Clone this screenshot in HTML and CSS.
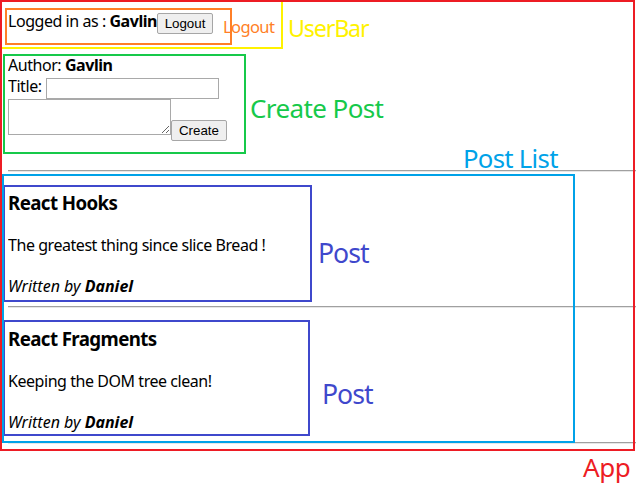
FILE: index.html
```html
<!DOCTYPE html>
<html lang="en">
<head>
<meta charset="utf-8">
<title>Blog App</title>
<link rel="stylesheet" href="styles.css">
</head>
<body>
<div class="app">
  <div class="userbar">
    <span class="line">Logged in as : <b>Gavlin</b></span><button class="btn logout" type="button">Logout</button>
  </div>
  <form class="create">
    <div class="line">Author: <b>Gavlin</b></div>
    <div class="title-row">
      <label class="line title-label" for="title">Title:</label><input id="title" class="title-input" type="text">
    </div>
    <div class="content-row">
      <textarea class="content-input"></textarea><input class="btn create-btn" type="submit" value="Create">
    </div>
  </form>
  <hr class="rule">
  <div class="postlist">
    <div class="post">
      <h3 class="post-title">React Hooks</h3>
      <div class="line">The greatest thing since slice Bread !</div>
      <div class="line written"><i>Written by <b>Daniel</b></i></div>
    </div>
    <hr class="rule">
    <div class="post">
      <h3 class="post-title">React Fragments</h3>
      <div class="line">Keeping the DOM tree clean!</div>
      <div class="line written"><i>Written by <b>Daniel</b></i></div>
    </div>
    <hr class="rule">
  </div>
</div>

<div class="annotations">
  <div class="box box-userbar"></div>
  <div class="box box-logout"></div>
  <div class="box box-create"></div>
  <div class="box box-post1"></div>
  <div class="box box-post2"></div>
  <div class="box box-postlist"></div>
  <div class="box box-app"></div>
  <span class="label label-logout">Logout</span>
  <span class="label label-userbar">UserBar</span>
  <span class="label label-create">Create Post</span>
  <span class="label label-postlist">Post List</span>
  <span class="label label-post1">Post</span>
  <span class="label label-post2">Post</span>
  <span class="label label-app">App</span>
</div>
</body>
</html>
```

FILE: styles.css
```css
* {
  box-sizing: border-box;
}

html,
body {
  background: #ffffff;
}

body {
  margin: 8px 0 0 8px;
  font-family: "Noto Sans", "Open Sans", sans-serif;
  font-size: 16px;
  line-height: 21px;
  letter-spacing: -0.45px;
  color: #000000;
}

.line {
  display: block;
  line-height: 21px;
}

/* ---------- UserBar ---------- */
.userbar {
  display: flex;
  align-items: flex-start;
  padding-top: 3px;
}

.btn {
  width: 56px;
  height: 21px;
  padding: 0;
  margin: 0;
  border: 1px solid #a6a6a6;
  border-radius: 2px;
  background: #efefef;
  color: #000000;
  font-family: "Liberation Sans", Arial, sans-serif;
  font-size: 13.33px;
  line-height: 19px;
  letter-spacing: 0;
  text-align: center;
}

.logout {
  margin-top: 2px;
}

/* ---------- CreatePost ---------- */
.create {
  margin: 21px 0 29px;
}

.title-row,
.content-row {
  display: flex;
  align-items: flex-start;
}

.title-label {
  width: 38px;
}

.title-input {
  margin: 2px 0 0;
  width: 173px;
  height: 21px;
  padding: 1px 2px;
  border: 1px solid #a9a9a9;
  font-family: "Liberation Sans", Arial, sans-serif;
  font-size: 13.33px;
}

.content-input {
  margin: 0;
  width: 163px;
  height: 36px;
  padding: 2px;
  border: 1px solid #a9a9a9;
  font-family: "Liberation Mono", monospace;
  font-size: 13.33px;
}

.create-btn {
  margin-top: 21px;
}

/* ---------- Post list ---------- */
.rule {
  margin: 8px 0;
  border: none;
  border-top: 1px solid #a0a0a0;
  border-bottom: 1px solid #e6e6e6;
  height: 0;
}

.post {
  padding: 11px 0 1px;
}

.post-title {
  margin: 0 0 20px;
  font-size: 18.72px;
  line-height: 24px;
  font-weight: bold;
  letter-spacing: -0.6px;
}

.written {
  margin-top: 20px;
  letter-spacing: 0;
}

/* ---------- Annotation overlay ---------- */
.annotations {
  position: absolute;
  top: 0;
  left: 0;
  width: 636px;
  height: 495px;
  pointer-events: none;
  font-family: "Noto Sans", "Open Sans", sans-serif;
}

.box {
  position: absolute;
  border: 2px solid;
}

.box-app {
  left: 0;
  top: 0;
  width: 635px;
  height: 451px;
  border-color: #ed1c24;
}

.box-userbar {
  left: 0;
  top: 0;
  width: 283px;
  height: 49px;
  border-color: #fff200;
}

.box-logout {
  left: 5px;
  top: 8px;
  width: 227px;
  height: 37px;
  border-color: #ff7f27;
}

.box-create {
  left: 3px;
  top: 54px;
  width: 243px;
  height: 100px;
  border-color: #16c94a;
}

.box-postlist {
  left: 2px;
  top: 174px;
  width: 573px;
  height: 269px;
  border-color: #00a2e8;
}

.box-post1 {
  left: 3px;
  top: 185px;
  width: 309px;
  height: 117px;
  border-color: #3f48cc;
}

.box-post2 {
  left: 3px;
  top: 320px;
  width: 307px;
  height: 116px;
  border-color: #3f48cc;
}

.label {
  position: absolute;
  line-height: 1;
  white-space: nowrap;
}

.label-logout {
  left: 223px;
  top: 18.6px;
  font-size: 16.5px;
  letter-spacing: -0.6px;
  color: #ff7f27;
}

.label-userbar {
  left: 288px;
  top: 16.6px;
  font-size: 23.3px;
  letter-spacing: -1.2px;
  color: #fff200;
}

.label-create {
  left: 250px;
  top: 94.6px;
  font-size: 26px;
  letter-spacing: -0.6px;
  color: #16c94a;
}

.label-postlist {
  left: 463px;
  top: 145.5px;
  font-size: 25.7px;
  letter-spacing: -0.7px;
  color: #00a2e8;
}

.label-post1 {
  left: 318px;
  top: 240.4px;
  font-size: 26.6px;
  letter-spacing: -1px;
  color: #3f48cc;
}

.label-post2 {
  left: 322px;
  top: 380.7px;
  font-size: 26.6px;
  letter-spacing: -1px;
  color: #3f48cc;
}

.label-app {
  left: 583px;
  top: 453.6px;
  font-size: 26px;
  color: #ed1c24;
}
```
